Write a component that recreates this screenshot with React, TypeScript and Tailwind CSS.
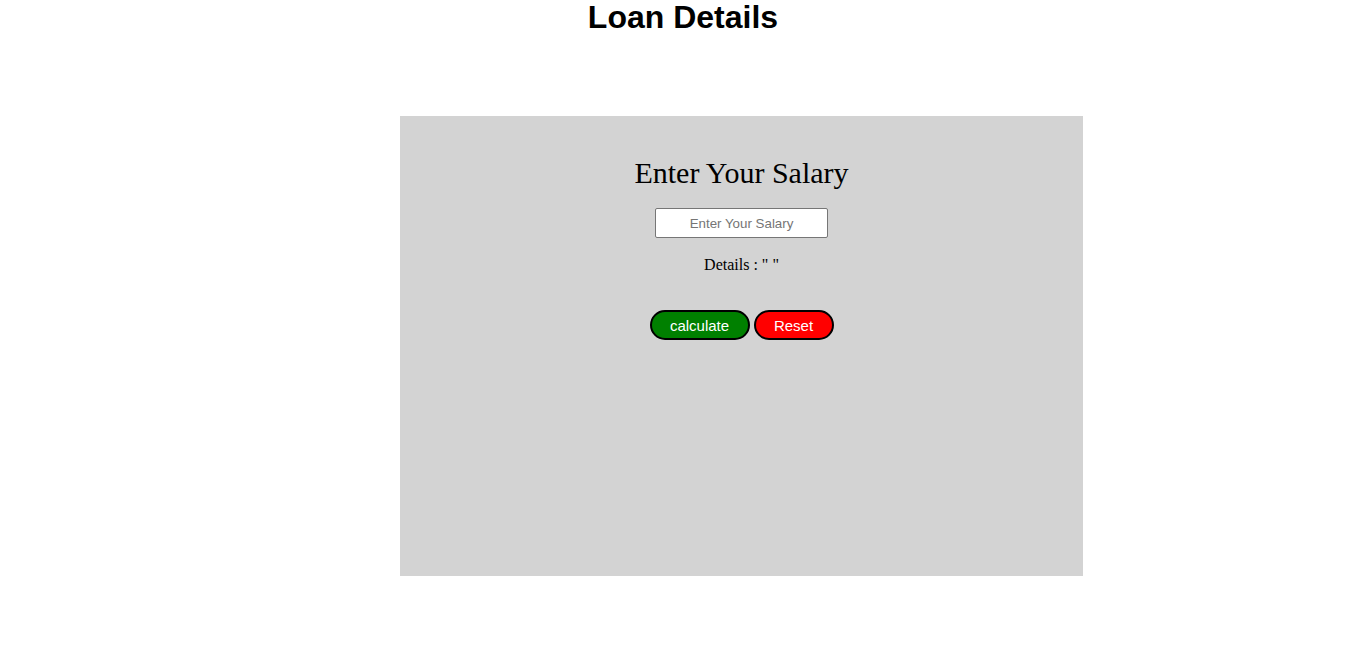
export default function App() {
  return (
    <div className="min-h-[655px] bg-white">
      <h1 className="text-center text-[32px] leading-[35px] font-bold text-black font-['Liberation_Sans',Arial,sans-serif]">
        Loan Details
      </h1>

      <div className="mt-[81px] ml-[400px] w-[683px] h-[460px] bg-[#d3d3d3] flex flex-col items-center font-['Liberation_Serif','Times_New_Roman',serif] text-black">
        <h2 className="mt-[40px] text-[30px] leading-[34px]">Enter Your Salary</h2>

        <input
          type="text"
          placeholder="Enter Your Salary"
          className="mt-[18px] w-[173px] h-[30px] bg-white border border-[#767676] rounded-[2px] text-center text-[13.33px] placeholder:text-[#757575] font-['Liberation_Sans',Arial,sans-serif] outline-none"
        />

        <p className="mt-[18px] text-[16px] leading-[18px]">Details : " "</p>

        <div className="mt-[36px] flex gap-[4px] font-['Liberation_Sans',Arial,sans-serif]">
          <button className="w-[100px] h-[30px] pt-[2px] rounded-full border-2 border-black bg-[#008000] text-white text-[15px] leading-[18px]">
            calculate
          </button>
          <button className="w-[80px] h-[30px] pt-[2px] rounded-full border-2 border-black bg-[#ff0000] text-white text-[15px] leading-[18px]">
            Reset
          </button>
        </div>
      </div>
    </div>
  );
}
